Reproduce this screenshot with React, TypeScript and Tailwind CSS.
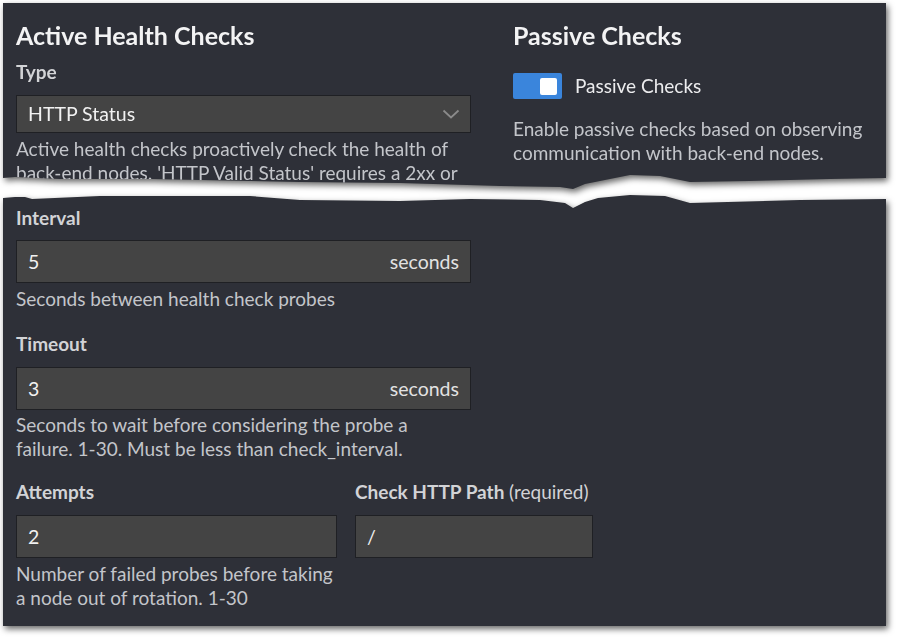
import { ReactNode } from 'react';

const font = { fontFamily: 'Lato, "Open Sans", sans-serif' };

function Label({ children }: { children: ReactNode }) {
  return <div className="text-[19px] leading-6 font-bold text-[#d2d3d6]">{children}</div>;
}

function Help({ children }: { children: ReactNode }) {
  return <p className="text-[19px] leading-6 text-[#c3c5ca]">{children}</p>;
}

function TextInput({ value, suffix }: { value: string; suffix?: string }) {
  return (
    <div className="h-[43px] flex items-center justify-between border border-[#1f2024] bg-[#444444] px-[11px] text-[19.5px] text-[#f1f1f1]">
      <span>{value}</span>
      {suffix && <span className="text-[#e2e2e2]">{suffix}</span>}
    </div>
  );
}

export default function App() {
  return (
    <div className="w-[898px] h-[637px] bg-white pl-[3px] pt-[3px]" style={font}>
      <div className="w-[883px] [filter:drop-shadow(2px_3px_3px_rgba(0,0,0,0.6))]">
        {/* Top half, torn at the bottom */}
        <div className="h-[186px] overflow-hidden bg-[#2e3038] px-[13px] pt-[17px] flex gap-[42px] [clip-path:polygon(0_0,883px_0,883px_175px,827px_176px,747px_178px,687px_179px,657px_173px,627px_172px,597px_178px,582px_181px,570px_186px,557px_184px,497px_183px,397px_180px,297px_179px,247px_178px,147px_176px,57px_176px,12px_174px,0_175px)]">
          <div className="w-[455px] shrink-0">
            <h2 className="text-[25px] leading-[30px] font-bold text-[#f3f3f4]">Active Health Checks</h2>
            <div className="mt-[10px]">
              <Label>Type</Label>
            </div>
            <div className="mt-[11px] h-[38px] flex items-center justify-between border border-[#1f2024] bg-[#444444] pl-[11px] pr-[10px] text-[19.5px] text-[#f1f1f1]">
              <span>HTTP Status</span>
              <svg width="18" height="10" viewBox="0 0 18 10" fill="none">
                <path d="M1.5 1.5 L9 8.5 L16.5 1.5" stroke="#8a8a8a" strokeWidth="1.8" />
              </svg>
            </div>
            <div className="mt-[4px]">
              <Help>
                Active health checks proactively check the health of back-end nodes. 'HTTP Valid Status' requires a 2xx or
              </Help>
            </div>
          </div>
          <div className="flex-1">
            <h2 className="text-[25px] leading-[30px] font-bold text-[#f3f3f4]">Passive Checks</h2>
            <div className="mt-[22px] flex items-center gap-[13px]">
              <div className="w-[49px] h-[26px] rounded-[2px] bg-[#3a85dc] flex items-center justify-end pr-[5px]">
                <div className="w-[17px] h-[17px] rounded-[2px] bg-white" />
              </div>
              <span className="text-[19px] text-[#ececee]">Passive Checks</span>
            </div>
            <div className="mt-[16px]">
              <Help>Enable passive checks based on observing communication with back-end nodes.</Help>
            </div>
          </div>
        </div>

        {/* Bottom half, torn at the top */}
        <div className="h-[437px] bg-[#2e3038] px-[13px] pt-[17px] [clip-path:polygon(0_9px,12px_8px,22px_8px,29px_10px,97px_7px,247px_7px,297px_11px,397px_12px,467px_10px,537px_11px,562px_14px,570px_19px,582px_13px,595px_9px,627px_6px,662px_7px,687px_14px,797px_11px,883px_10px,883px_100%,0_100%)]">
          <div className="w-[455px]">
            <Label>Interval</Label>
            <div className="mt-[10px]">
              <TextInput value="5" suffix="seconds" />
            </div>
            <div className="mt-[4px]">
              <Help>Seconds between health check probes</Help>
            </div>

            <div className="mt-[21px]">
              <Label>Timeout</Label>
            </div>
            <div className="mt-[11px]">
              <TextInput value="3" suffix="seconds" />
            </div>
            <div className="mt-[3px] pr-[30px]">
              <Help>Seconds to wait before considering the probe a failure. 1-30. Must be less than check_interval.</Help>
            </div>
          </div>

          <div className="mt-[19px] flex gap-[18px]">
            <div className="w-[321px]">
              <Label>Attempts</Label>
              <div className="mt-[11px]">
                <TextInput value="2" />
              </div>
              <div className="mt-[4px] w-[330px]">
                <Help>Number of failed probes before taking a node out of rotation. 1-30</Help>
              </div>
            </div>
            <div className="w-[238px]">
              <Label>
                Check HTTP Path <span className="font-normal">(required)</span>
              </Label>
              <div className="mt-[11px]">
                <TextInput value="/" />
              </div>
            </div>
          </div>
        </div>
      </div>
    </div>
  );
}
